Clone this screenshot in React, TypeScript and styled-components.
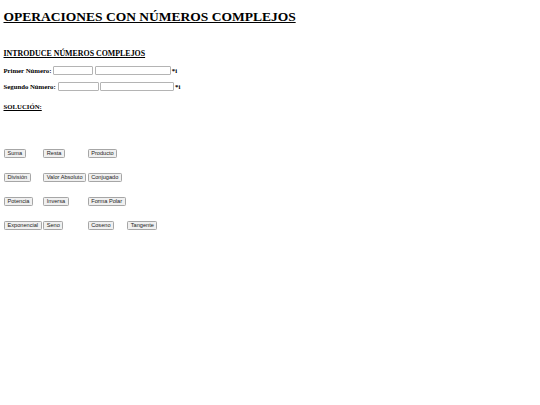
import React from "react";
import styled, { createGlobalStyle } from "styled-components";

const Global = createGlobalStyle`
  html, body { margin: 0; padding: 0; background: #fff; }
  body { font-family: "Liberation Serif", "Times New Roman", serif; color: #000; }
`;

const Page = styled.div`
  padding: 0 3.5px;
  display: flex;
  flex-direction: column;
  align-items: flex-start;
`;

const Title = styled.h1`
  margin: 8.5px 0 0;
  font-size: 13.5px;
  line-height: 16px;
  font-weight: bold;
  text-decoration: underline;
`;

const Section = styled.h3`
  margin: 24px 0 0;
  font-size: 7.9px;
  line-height: 9px;
  font-weight: bold;
  text-decoration: underline;
`;

const SubSection = styled.h4`
  margin: 12.5px 0 0;
  font-size: 6.75px;
  line-height: 8px;
  font-weight: bold;
  text-decoration: underline;
`;

const Row = styled.div<{ $top: number }>`
  display: flex;
  align-items: center;
  gap: 1.8px;
  margin-top: ${(p) => p.$top}px;
  font-size: 6.75px;
  line-height: 9px;
  font-weight: bold;
  height: 9px;
`;

const Field = styled.input<{ $w: number }>`
  box-sizing: border-box;
  width: ${(p) => p.$w}px;
  height: 9px;
  padding: 0;
  margin: 0;
  border: 0.85px solid #b4b4b4;
  border-radius: 1px;
  background: #fff;
  font-size: 5.6px;
`;

const Suffix = styled.span`
  margin-left: -1px;
`;

const ButtonGrid = styled.div`
  display: grid;
  grid-template-columns: repeat(4, max-content);
  column-gap: 1.7px;
  row-gap: 15px;
  justify-items: start;
  margin: 37.5px 0 0 0.5px;
`;

const Btn = styled.button`
  box-sizing: border-box;
  font-family: "Liberation Sans", Arial, sans-serif;
  font-size: 5.625px;
  line-height: 7px;
  height: 9px;
  padding: 0 2.5px;
  margin: 0;
  color: #222;
  background: #f0f0f0;
  border: 0.85px solid #a6a6a6;
  border-radius: 1.3px;
  white-space: nowrap;
`;

const buttons: (string | null)[][] = [
  ["Suma", "Resta", "Producto", null],
  ["División", "Valor Absoluto", "Conjugado", null],
  ["Potencia", "Inversa", "Forma Polar", null],
  ["Exponencial", "Seno", "Coseno", "Tangente"],
];

export default function App() {
  return (
    <Page>
      <Global />
      <Title>OPERACIONES CON NÚMEROS COMPLEJOS</Title>
      <Section>INTRODUCE NÚMEROS COMPLEJOS</Section>
      <Row $top={8}>
        <span>Primer Número:</span>
        <Field $w={40} />
        <Field $w={76} />
        <Suffix>*i</Suffix>
      </Row>
      <Row $top={7}>
        <span>Segundo Número:</span>
        <Field $w={41} />
        <Field $w={74} />
        <Suffix>*i</Suffix>
      </Row>
      <SubSection>SOLUCIÓN:</SubSection>
      <ButtonGrid>
        {buttons.flatMap((row, r) =>
          row.map((b, c) => (b ? <Btn key={`${r}-${c}`}>{b}</Btn> : <span key={`${r}-${c}`} />))
        )}
      </ButtonGrid>
    </Page>
  );
}
